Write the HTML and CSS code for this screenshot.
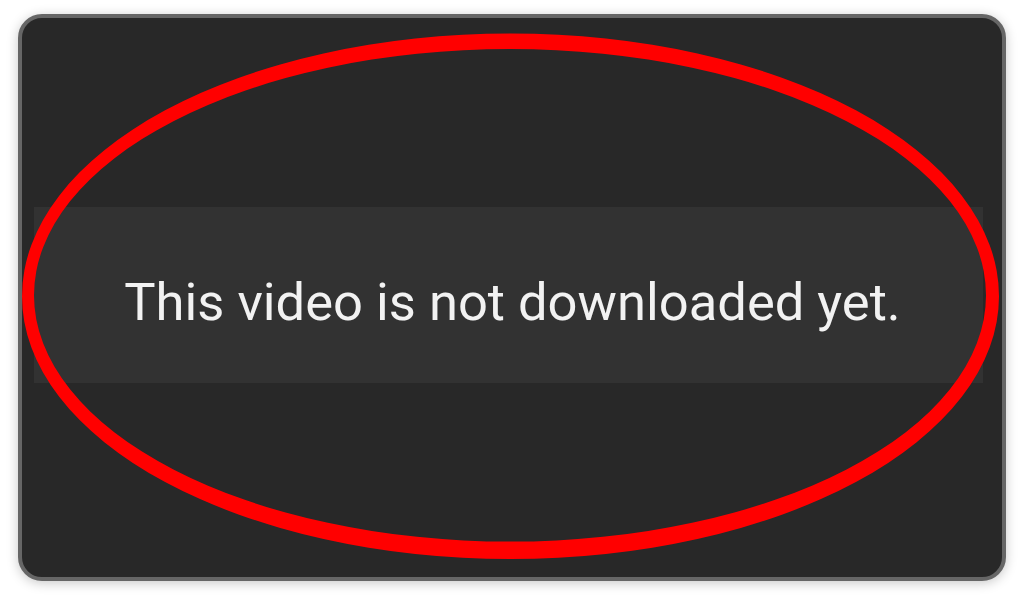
FILE: index.html
```
<!DOCTYPE html>
<html>
<head>
<meta charset="utf-8">
<link rel="stylesheet" href="styles.css">
</head>
<body>
<div class="frame">
  <div class="band">
    <p class="msg">This video is not downloaded yet.</p>
  </div>
</div>
<svg class="mark" viewBox="0 0 1024 603" width="1024" height="603" xmlns="http://www.w3.org/2000/svg">
  <path fill="#ff0000" fill-rule="evenodd" d="M22,296.2 a488.5,262.8 0 1,0 977,0 a488.5,262.8 0 1,0 -977,0 Z M34,295.3 a476,246.3 0 1,0 952,0 a476,246.3 0 1,0 -952,0 Z"/>
</svg>
</body>
</html>
```
FILE: styles.css
```
html, body {
  margin: 0;
  padding: 0;
  background: #ffffff;
}
body {
  position: relative;
  width: 1024px;
  height: 603px;
  overflow: hidden;
  padding-top: 14px;
  box-sizing: border-box;
}
.frame {
  margin-left: 18px;
  width: 988px;
  height: 567px;
  box-sizing: border-box;
  border: 4px solid #666666;
  border-radius: 24px;
  background: #282828;
  box-shadow: 0 2px 12px rgba(0, 0, 0, 0.22);
  padding-top: 189px;
}
.band {
  margin-left: 12px;
  margin-right: 19px;
  height: 176px;
  background: #323232;
  display: flex;
  align-items: center;
  justify-content: center;
}
.msg {
  margin: 0;
  font-family: Roboto, "Liberation Sans", sans-serif;
  font-size: 52.5px;
  color: #f2f2f2;
  padding-top: 14px;
  padding-left: 8px;
}
.mark {
  position: absolute;
  left: 0;
  top: 0;
}
```
